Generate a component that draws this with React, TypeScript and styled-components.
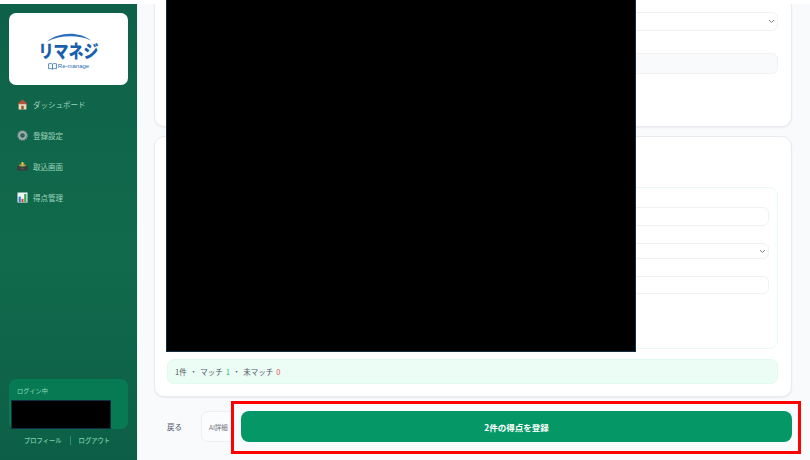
import React from "react";
import styled, { createGlobalStyle } from "styled-components";

const FONT = `"Noto Sans CJK JP", "Noto Sans", sans-serif`;

const GlobalStyle = createGlobalStyle`
  html, body { margin: 0; padding: 0; background: #fff; }
  * { box-sizing: border-box; }
`;

const HomeIcon = () => (
  <svg width="11" height="11" viewBox="0 0 11 11">
    <path d="M5.5 .5 1 4.4v1.4h9V4.4z" fill="#b5533c" />
    <rect x="1.6" y="5.2" width="7.8" height="5.3" fill="#ead9b8" />
    <rect x="4.3" y="6.8" width="2.4" height="3.7" fill="#8a5a3a" />
  </svg>
);

const GearIcon = () => (
  <svg width="11" height="11" viewBox="0 0 11 11">
    <circle cx="5.5" cy="5.5" r="3.4" fill="none" stroke="#a3acb0" strokeWidth="2.2" />
    <circle cx="5.5" cy="5.5" r="4.8" fill="none" stroke="#8a9498" strokeWidth="1.1" strokeDasharray="1.4 1.1" />
    <circle cx="5.5" cy="5.5" r="1.3" fill="#4f5d63" />
  </svg>
);

const TrayIcon = () => (
  <svg width="11" height="11" viewBox="0 0 11 11">
    <path d="M2.6 3.4h5.8L9 5.4H2z" fill="#c99a3d" />
    <path d="M4.6 1h1.8v1.6h1.2L5.5 4.6 3.4 2.6h1.2z" fill="#e4bb52" />
    <path d="M.2 5.2h3.3l.6 1.2h2.8l.6-1.2h3.3v4.3H.2z" fill="#3a3c40" />
    <rect x="3.6" y="7.4" width="3.8" height=".8" fill="#5b5e62" />
  </svg>
);

const ChartIcon = () => (
  <svg width="11" height="11" viewBox="0 0 11 11">
    <rect x=".5" y=".5" width="10" height="10" fill="#f4f7f8" />
    <rect x="1.6" y="4.6" width="2.2" height="5.4" fill="#2f80c8" />
    <rect x="4.5" y="6.8" width="2" height="3.2" fill="#d8443c" />
    <rect x="7.2" y="2" width="2.2" height="8" fill="#3aa655" />
  </svg>
);

const BookIcon = () => (
  <svg width="9" height="7" viewBox="0 0 9 7">
    <path d="M4.5 1.2C3.5.4 2 .4.6.8v5c1.4-.4 2.9-.4 3.9.4 1-.8 2.5-.8 3.9-.4v-5C7 .4 5.5.4 4.5 1.2zm0 0v5" fill="none" stroke="#2b6cb5" strokeWidth=".8" />
  </svg>
);

const ChevronIcon = () => (
  <svg width="7" height="5" viewBox="0 0 7 5">
    <path d="M1 1l2.5 2.5L6 1" fill="none" stroke="#7b8290" strokeWidth="1" />
  </svg>
);

const NAV_ITEMS = [
  { label: "ダッシュボード", icon: <HomeIcon /> },
  { label: "登録設定", icon: <GearIcon /> },
  { label: "取込画面", icon: <TrayIcon /> },
  { label: "得点管理", icon: <ChartIcon /> },
];

export default function App() {
  return (
    <>
      <GlobalStyle />
      <Page>
        <TopStrip />
        <Body>
          <Sidebar>
            <LogoCard>
              <LogoArc width="46" height="10" viewBox="0 0 46 10">
                <path d="M1 9.5C12 .5 32 -1.5 45 8.5C32 2.5 14 3 1 9.5z" fill="#2c6fbd" />
              </LogoArc>
              <LogoText>リマネジ</LogoText>
              <LogoSub>
                <BookIcon />
                <span>Re-manage</span>
              </LogoSub>
            </LogoCard>
            <NavList>
              {NAV_ITEMS.map((item) => (
                <NavItem key={item.label}>
                  <NavIcon>{item.icon}</NavIcon>
                  <span>{item.label}</span>
                </NavItem>
              ))}
            </NavList>
            <SidebarFooter>
              <LoginCard>
                <LoginLabel>ログイン中</LoginLabel>
                <LoginMask />
              </LoginCard>
              <LinkRow>
                <span>プロフィール</span>
                <LinkDivider />
                <span>ログアウト</span>
              </LinkRow>
            </SidebarFooter>
          </Sidebar>
          <Main>
            <TopCard>
              <Field $height={19}>
                <ChevronIcon />
              </Field>
              <Field $height={21} $muted />
            </TopCard>
            <BottomCard>
              <InnerPanel>
                <Field $height={19} />
                <Field $height={16}>
                  <ChevronIcon />
                </Field>
                <Field $height={18} />
              </InnerPanel>
              <Summary>
                <span>1件</span>
                <span>・</span>
                <span>マッチ</span>
                <Matched>1</Matched>
                <span>・</span>
                <span>未マッチ</span>
                <Unmatched>0</Unmatched>
              </Summary>
            </BottomCard>
            <Footer>
              <BackLink>戻る</BackLink>
              <DetailButton>AI詳細</DetailButton>
              <SubmitButton>2件の得点を登録</SubmitButton>
            </Footer>
          </Main>
        </Body>
        <ContentMask />
        <RedFrame />
      </Page>
    </>
  );
}

const Page = styled.div`
  position: relative;
  width: 810px;
  height: 460px;
  overflow: hidden;
  display: flex;
  flex-direction: column;
  font-family: ${FONT};
`;

const TopStrip = styled.div`
  height: 4px;
  background: #fff;
  flex: none;
`;

const Body = styled.div`
  flex: 1;
  min-height: 0;
  display: flex;
`;

const Sidebar = styled.aside`
  width: 137px;
  flex: none;
  display: flex;
  flex-direction: column;
  padding: 9px 9px 0;
  background: linear-gradient(180deg, #0e6148 0%, #116a4c 55%, #0c5f46 100%);
`;

const LogoCard = styled.div`
  height: 72px;
  background: #fff;
  border-radius: 7px;
  display: flex;
  flex-direction: column;
  align-items: center;
  padding-top: 19px;
  flex: none;
`;

const LogoArc = styled.svg`
  display: block;
`;

const LogoText = styled.div`
  font-size: 15px;
  line-height: 17px;
  font-weight: 900;
  color: #1a5fae;
  transform: scaleY(1.2);
`;

const LogoSub = styled.div`
  display: flex;
  align-items: center;
  gap: 1px;
  font-family: "Liberation Sans", sans-serif;
  font-size: 6px;
  line-height: 8px;
  color: #2b6cb5;
  margin-top: 3px;
`;

const NavList = styled.nav`
  display: flex;
  flex-direction: column;
  gap: 11px;
  margin-top: 9px;
  padding-left: 8px;
`;

const NavItem = styled.div`
  height: 20px;
  display: flex;
  align-items: center;
  gap: 5px;
  font-size: 7.5px;
  color: #9fd4bb;
`;

const NavIcon = styled.span`
  width: 11px;
  height: 11px;
  display: flex;
`;

const SidebarFooter = styled.div`
  margin-top: auto;
  padding-bottom: 14px;
`;

const LoginCard = styled.div`
  height: 50px;
  background: #087a53;
  border-radius: 7px;
  padding: 7px 0 0 2px;
`;

const LoginLabel = styled.div`
  font-size: 6.2px;
  line-height: 10px;
  height: 14px;
  padding-left: 6px;
  color: #8fdcb9;
`;

const LoginMask = styled.div`
  width: 100px;
  height: 29px;
  background: #000;
  border: 1px solid #0f2f45;
`;

const LinkRow = styled.div`
  display: flex;
  justify-content: center;
  align-items: center;
  gap: 8px;
  height: 12px;
  margin-top: 5px;
  padding-right: 3px;
  font-size: 6.3px;
  font-weight: 500;
  color: #7fd0ab;
`;

const LinkDivider = styled.span`
  width: 1px;
  height: 9px;
  background: #2e8f6c;
`;

const Main = styled.main`
  flex: 1;
  min-width: 0;
  background: #f8fafc;
  border-left: 1px solid #eef1f5;
  padding: 0 18px 0 16px;
  display: flex;
  flex-direction: column;
`;

const TopCard = styled.section`
  height: 123px;
  background: #fff;
  border: 1px solid #e8ebef;
  border-top: none;
  border-radius: 0 0 10px 10px;
  box-shadow: 0 1px 2px rgba(0, 0, 0, 0.06);
  padding: 8px 13px 0 12px;
  display: flex;
  flex-direction: column;
  gap: 22px;
`;

const BottomCard = styled.section`
  height: 261px;
  margin-top: 9px;
  background: #fff;
  border: 1px solid #e8ebef;
  border-radius: 10px;
  box-shadow: 0 1px 2px rgba(0, 0, 0, 0.06);
  padding: 50px 13px 0 12px;
  display: flex;
  flex-direction: column;
  gap: 10px;
`;

const InnerPanel = styled.div`
  height: 162px;
  border: 1px solid #e8faf2;
  border-radius: 9px;
  padding: 19px 8px 0;
  display: flex;
  flex-direction: column;
  gap: 17px;
`;

const Field = styled.div<{ $height: number; $muted?: boolean }>`
  height: ${(p) => p.$height}px;
  flex: none;
  background: ${(p) => (p.$muted ? "#f8fafb" : "#fff")};
  border: 1px solid #eff1f3;
  border-radius: 6px;
  display: flex;
  align-items: center;
  justify-content: flex-end;
  padding-right: 2px;
`;

const Summary = styled.div`
  height: 25px;
  background: #ebfdf4;
  border: 1px solid #e3faee;
  border-radius: 7px;
  padding-left: 7px;
  display: flex;
  align-items: center;
  gap: 3px;
  font-size: 7.5px;
  color: #4b5563;
`;

const Matched = styled.span`
  color: #22b573;
`;

const Unmatched = styled.span`
  color: #f0524f;
`;

const Footer = styled.div`
  margin-top: 14px;
  height: 31px;
  display: flex;
  align-items: center;
  padding-left: 13px;
`;

const BackLink = styled.span`
  width: 34px;
  font-size: 7.5px;
  color: #4b5563;
  flex: none;
`;

const DetailButton = styled.button`
  width: 40px;
  height: 31px;
  flex: none;
  padding: 0 0 0 7px;
  text-align: left;
  background: #fbfcfd;
  border: 1px solid #eceff3;
  border-radius: 7px;
  font-family: ${FONT};
  font-size: 6.5px;
  color: #6b7280;
`;

const SubmitButton = styled.button`
  position: relative;
  z-index: 2;
  flex: 1;
  height: 31px;
  border: none;
  border-radius: 8px;
  background: #059866;
  font-family: ${FONT};
  font-size: 8.5px;
  font-weight: 700;
  color: #fff;
`;

const ContentMask = styled.div`
  position: absolute;
  left: 166px;
  top: 0;
  width: 470px;
  height: 352px;
  background: #000;
  border: 1px solid #0f2f45;
  border-top: none;
`;

const RedFrame = styled.div`
  position: absolute;
  z-index: 1;
  left: 231px;
  top: 401px;
  width: 570px;
  height: 53px;
  background: #f8fafc;
  border: 3px solid #f00;
`;
